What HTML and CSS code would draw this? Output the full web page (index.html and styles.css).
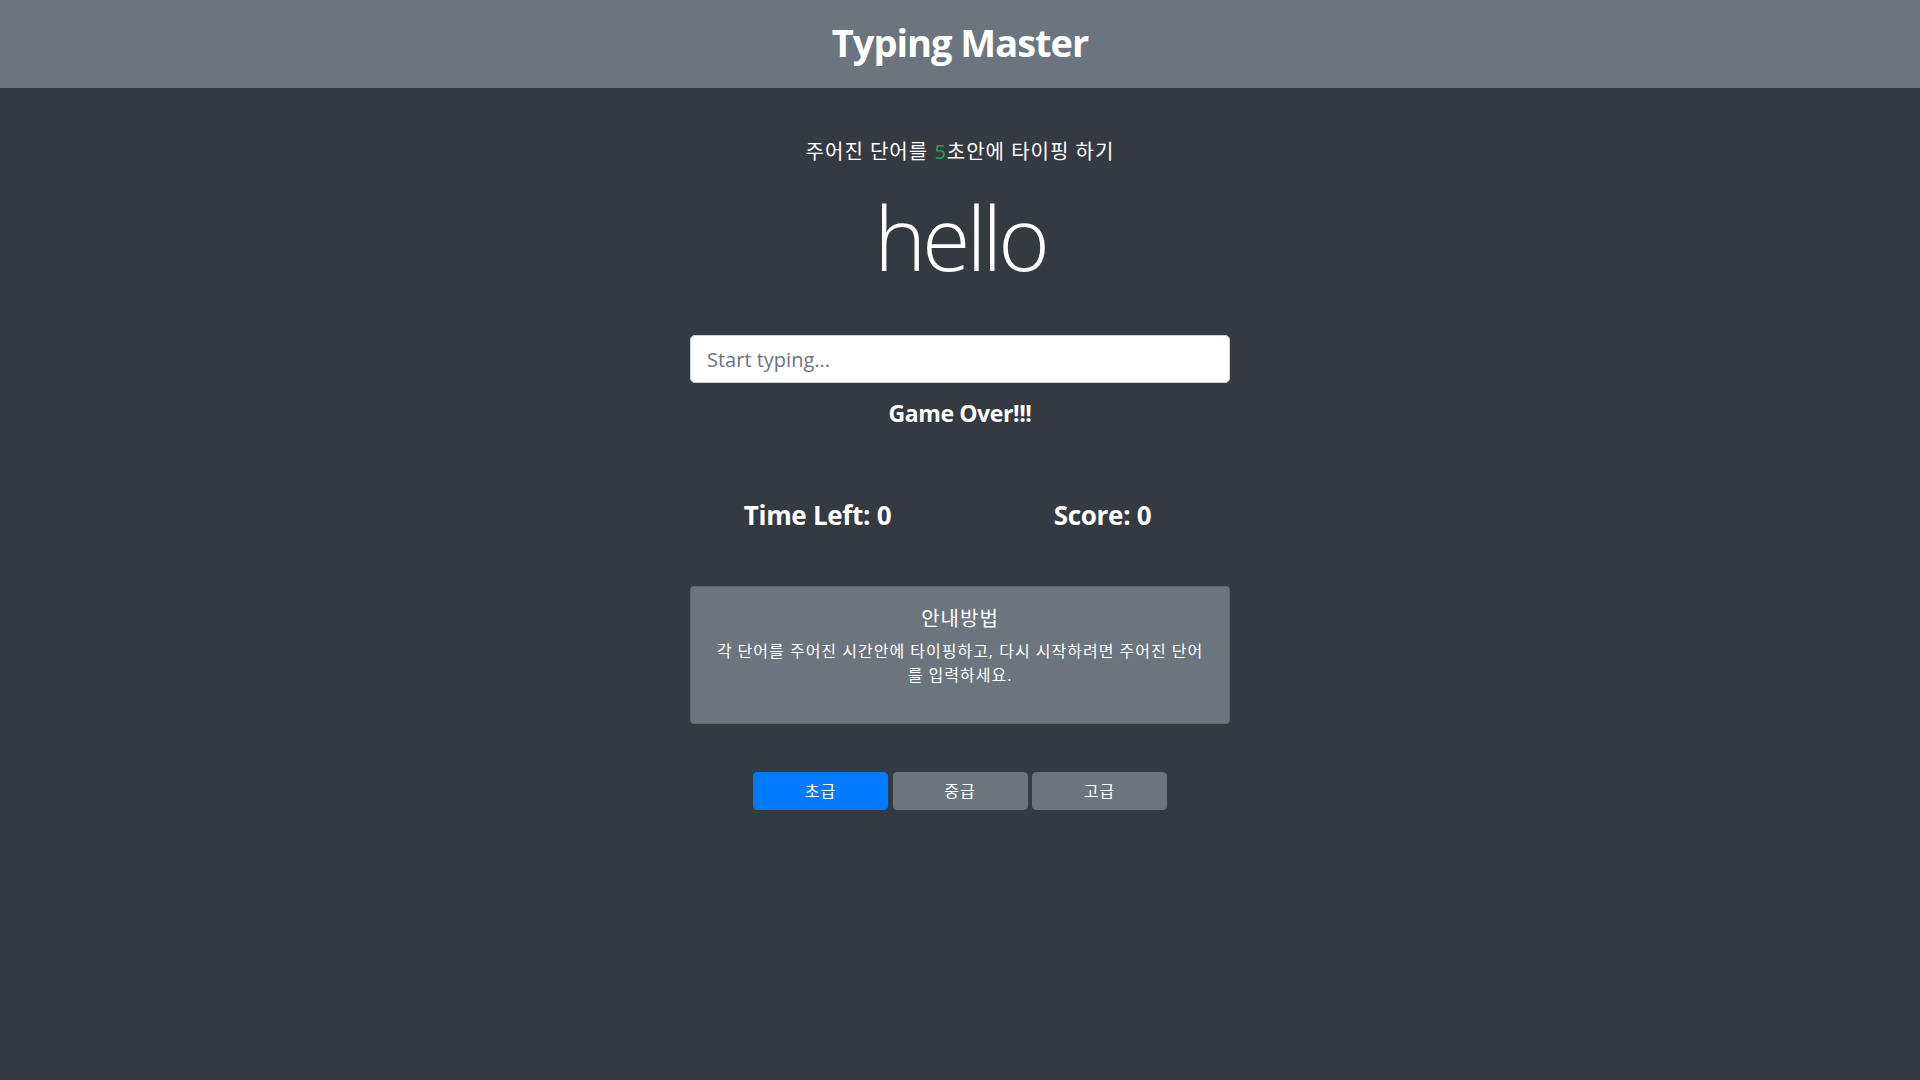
FILE: index.html
```html
<!DOCTYPE html>
<html lang="ko">
<head>
<meta charset="utf-8">
<title>Typing Master</title>
<link rel="stylesheet" href="styles.css">
</head>
<body>
<header class="app-header">
  <h1 class="app-title">Typing Master</h1>
</header>
<main class="game">
  <p class="lead">주어진 단어를 <span class="seconds">5</span>초안에 타이핑 하기</p>
  <h2 class="word">hello</h2>
  <input class="word-input" type="text" placeholder="Start typing...">
  <h4 class="message">Game Over!!!</h4>
  <div class="stats">
    <h3 class="stat">Time Left: 0</h3>
    <h3 class="stat">Score: 0</h3>
  </div>
  <section class="card">
    <h5 class="card-title">안내방법</h5>
    <p class="card-text">각 단어를 주어진 시간안에 타이핑하고, 다시 시작하려면 주어진 단어를 입력하세요.</p>
  </section>
  <div class="levels">
    <button class="btn btn-primary">초급</button>
    <button class="btn btn-secondary">중급</button>
    <button class="btn btn-secondary">고급</button>
  </div>
</main>
</body>
</html>
```
FILE: styles.css
```css
* { box-sizing: border-box; }
html, body { margin: 0; padding: 0; }
body {
  background: #343a40;
  color: #fff;
  font-family: "Open Sans", "Noto Sans CJK KR", sans-serif;
  font-size: 16px;
  line-height: 1.5;
  min-height: 1080px;
}
.app-header {
  background: #6c757d;
  height: 88px;
  padding-bottom: 4px;
  display: flex;
  align-items: center;
  justify-content: center;
}
.app-title {
  margin: 0;
  font-size: 38px;
  font-weight: 700;
  line-height: 48px;
  letter-spacing: -1px;
}
.game {
  width: 540px;
  margin: 0 auto;
  padding-top: 49px;
  text-align: center;
  display: flex;
  flex-direction: column;
  align-items: stretch;
}
.lead {
  margin: 0;
  font-size: 20px;
  line-height: 30px;
  font-weight: 400;
  letter-spacing: 1px;
}
.seconds { color: #28a745; }
.word {
  margin: 13px 0 0;
  font-size: 88px;
  font-weight: 300;
  line-height: 115px;
  letter-spacing: -4px;
}
.word-input {
  margin-top: 40px;
  height: 48px;
  width: 100%;
  padding: 8px 16px;
  font-family: inherit;
  font-size: 20px;
  color: #495057;
  background: #fff;
  border: 1px solid #ced4da;
  border-radius: 4.8px;
  outline: none;
}
.word-input::placeholder { color: #6c757d; }
.message {
  margin: 16px 0 0;
  font-size: 23px;
  font-weight: 700;
  line-height: 29px;
  letter-spacing: -0.4px;
}
.stats {
  margin: 70px -15px 0;
  display: grid;
  grid-template-columns: 1fr 1fr;
}
.stat {
  margin: 0;
  padding: 0 15px;
  font-size: 26px;
  font-weight: 700;
  line-height: 34px;
  letter-spacing: -0.3px;
}
.card {
  margin-top: 54px;
  background: #6c757d;
  border: 1px solid rgba(0,0,0,.125);
  border-radius: 4px;
  padding: 20px 20px 36px;
}
.card-title {
  margin: 0 0 8px;
  font-size: 20px;
  font-weight: 400;
  line-height: 24px;
  letter-spacing: 1px;
}
.card-text {
  margin: 0;
  font-size: 16px;
  line-height: 24px;
  letter-spacing: 1px;
}
.levels {
  margin-top: 48px;
  display: flex;
  justify-content: center;
  gap: 4.5px;
}
.btn {
  width: 135px;
  height: 38px;
  border: 1px solid transparent;
  border-radius: 4px;
  color: #fff;
  font-family: inherit;
  font-size: 16px;
  line-height: 24px;
  padding: 6px 12px;
  letter-spacing: 1px;
  cursor: pointer;
}
.btn-primary { background: #007bff; border-color: #007bff; }
.btn-secondary { background: #6c757d; border-color: #6c757d; }
```
